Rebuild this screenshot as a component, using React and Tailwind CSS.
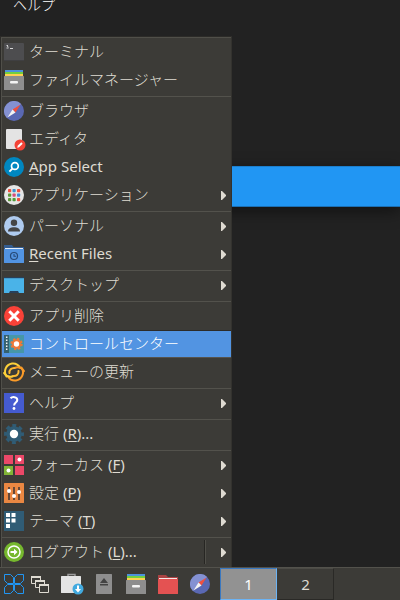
import React, { useState } from 'react';

const TerminalIcon = () => (
  <svg viewBox="0 0 20 20" className="h-5 w-5" aria-hidden="true">
    <rect y="1" width="20" height="18" rx="1" fill="#4d4d4f" />
    <path d="M0 18h20v1H0z" fill="#3f3f41" />
    <path d="M2.500 3.500h1.500M3 4l1.500 1M2.500 6h2M6 6.500h3" stroke="#e4e4e4" strokeWidth="0.900" fill="none" />
  </svg>
);

const CabinetIcon = () => (
  <svg viewBox="0 0 20 20" className="h-5 w-5" aria-hidden="true">
    <path d="M1 0h18v2H1z" fill="#4c92dc" />
    <path d="M1 2h18v2H1z" fill="#72cf3f" />
    <path d="M1 4h18v2H1z" fill="#ffd052" />
    <rect y="6" width="20" height="14" rx="0.500" fill="#8e8e8e" />
    <rect x="6" y="11" width="8" height="2.500" rx="1" fill="#f5f5f5" />
  </svg>
);

const BrowserIcon = () => (
  <svg viewBox="0 0 20 20" className="h-5 w-5" aria-hidden="true">
    <circle cx="10" cy="10" r="10" fill="#5a68b3" />
    <path d="M2.900 17.100A10 10 0 0 1 17.100 2.900z" fill="#8491d2" />
    <path d="M16.500 3.500L11.500 11.500 8.500 8.500z" fill="#f0503f" />
    <path d="M3.500 16.500L8.500 8.500l3 3z" fill="#f3f3f3" />
  </svg>
);

const EditorIcon = () => (
  <svg viewBox="0 0 20 20" className="h-5 w-5 overflow-visible" aria-hidden="true">
    <rect x="2" width="16" height="20" rx="1" fill="#e4e4e4" />
    <circle cx="16" cy="16" r="5.500" fill="#f44336" />
    <path d="M13.300 18.700l.4-1.900 3.600-3.500 1.400 1.400-3.600 3.600z" fill="#fff" />
  </svg>
);

const SearchIcon = () => (
  <svg viewBox="0 0 20 20" className="h-5 w-5" aria-hidden="true">
    <circle cx="10" cy="10" r="10" fill="#0087c1" />
    <circle cx="10.900" cy="9" r="3.400" fill="none" stroke="#fff" strokeWidth="1.700" />
    <path d="M8.600 11.400L5.400 14.600" stroke="#fff" strokeWidth="1.900" />
  </svg>
);

const dots = [
  [4, 4, '#f0503f'], [8.5, 4, '#3d93cf'], [13, 4, '#f0503f'],
  [4, 8.5, '#5b963a'], [8.5, 8.5, '#d94c78'], [13, 8.5, '#4287d8'],
  [4, 13, '#5b963a'], [8.5, 13, '#4d9a3a'], [13, 13, '#f0503f'],
];

const AppsIcon = () => (
  <svg viewBox="0 0 20 20" className="h-5 w-5" aria-hidden="true">
    <circle cx="10" cy="10" r="10" fill="#e6e6e6" />
    {dots.map(([x, y, fill]) => (
      <rect key={`${x}-${y}`} x={x} y={y} width="3.200" height="3.200" rx="0.800" fill={fill} />
    ))}
  </svg>
);

const PersonIcon = () => (
  <svg viewBox="0 0 20 20" className="h-5 w-5" aria-hidden="true">
    <circle cx="10" cy="10" r="10" fill="#afcbef" />
    <circle cx="10" cy="6.700" r="3.200" fill="#454545" />
    <path d="M4 15.500c0-3 2.800-4.300 6-4.300s6 1.300 6 4.300z" fill="#454545" />
  </svg>
);

const RecentIcon = () => (
  <svg viewBox="0 0 20 20" className="h-5 w-5" aria-hidden="true">
    <path d="M0 1h8l1.500 2H20v5H0z" fill="#345d91" />
    <path d="M1 4h18v2H1z" fill="#e5edf7" />
    <rect y="5" width="20" height="14" rx="0.500" fill="#5294e2" />
    <circle cx="10" cy="12" r="3.500" fill="none" stroke="#274a78" strokeWidth="1.200" />
    <path d="M10 10v2.300h2" fill="none" stroke="#274a78" strokeWidth="1.100" />
  </svg>
);

const DesktopIcon = () => (
  <svg viewBox="0 0 20 20" className="h-5 w-5" aria-hidden="true">
    <rect y="2" width="20" height="16" fill="#4ab3e8" />
    <path d="M0 2h20v1.200H0z" fill="#28405a" />
    <path d="M5 18l1-2h8l1 2z" fill="#28405a" />
  </svg>
);

const RemoveIcon = () => (
  <svg viewBox="0 0 20 20" className="h-5 w-5" aria-hidden="true">
    <circle cx="10" cy="10" r="10" fill="#fa4238" />
    <path d="M5.300 5.300l9.400 9.400M14.700 5.300l-9.400 9.400" stroke="#fff" strokeWidth="3" />
  </svg>
);

const ControlIcon = () => (
  <svg viewBox="0 0 20 20" className="h-5 w-5" aria-hidden="true">
    <rect y="1" width="20" height="18" fill="#4697a8" />
    <path d="M0 1h5v18H0z" fill="#35616f" />
    <path d="M2.700 2.500v15" stroke="#f5f5f5" strokeWidth="1.500" strokeDasharray="1.600 1.400" />
    <circle cx="12.500" cy="10" r="4.800" fill="#f07838" />
    <circle cx="12.500" cy="10" r="5.300" fill="none" stroke="#f07838" strokeWidth="1.800" strokeDasharray="2.300 1.860" />
    <circle cx="12.500" cy="10" r="2.700" fill="#fff" />
  </svg>
);

const RefreshIcon = () => (
  <svg viewBox="0 0 20 20" className="h-5 w-5 overflow-visible" aria-hidden="true">
    <g fill="none" strokeWidth="2" strokeLinecap="round">
      <path d="M2.500 14.500C-1 9 2 2.500 8 1.500c4-.5 6.500 1.500 8 4" stroke="#fdd03a" />
      <path d="M17.500 5.500c3.500 5.500.5 12-5.500 13-4 .5-6.500-1.500-8-4" stroke="#fb9b28" />
      <path d="M0 11c2.500 3.500 6 4.500 9.500 3" stroke="#fdd03a" />
      <path d="M20 9c-2.500-3.500-6-4.500-9.500-3" stroke="#fb9b28" />
      <path d="M5.500 11C5 8 7.500 5.800 10.500 6" stroke="#fdb831" />
      <path d="M14.500 9c.5 3-2 5.200-5 5" stroke="#fdb831" />
    </g>
  </svg>
);

const HelpIcon = () => (
  <svg viewBox="0 0 20 20" className="h-5 w-5" aria-hidden="true">
    <rect width="20" height="20" fill="#455bd0" />
    <path d="M6.500 5.300C8 3.700 13.300 3.300 13.300 7c0 2.500-3.200 2.600-3.200 5.500" fill="none" stroke="#fff" strokeWidth="2" />
    <circle cx="10" cy="15.500" r="1.400" fill="#fff" />
  </svg>
);

const RunIcon = () => (
  <svg viewBox="0 0 20 20" className="h-5 w-5" aria-hidden="true">
    <circle cx="10" cy="10" r="7.800" fill="#305c75" />
    <circle cx="10" cy="10" r="8.300" fill="none" stroke="#305c75" strokeWidth="3.400" strokeDasharray="3.800 2.719" strokeDashoffset="1.900" />
    <circle cx="10" cy="10" r="4.200" fill="#fff" />
  </svg>
);

const FocusIcon = () => (
  <svg viewBox="0 0 20 20" className="h-5 w-5" aria-hidden="true">
    <path d="M0 0h9v9H0zM11 0h9v9h-9zM11 11h9v9h-9z" fill="#ec4868" />
    <path d="M0 11h9v9H0z" fill="#82b536" />
    <circle cx="15.500" cy="4.500" r="2" fill="#fff" />
    <circle cx="4.500" cy="15.500" r="2" fill="#fff" />
  </svg>
);

const SlidersIcon = () => (
  <svg viewBox="0 0 20 20" className="h-5 w-5" aria-hidden="true">
    <rect width="20" height="20" rx="0.500" fill="#ea8742" />
    <path d="M5 4v13M10 4v13M15 4v13" stroke="#594237" strokeWidth="1.800" />
    <circle cx="5" cy="8" r="2" fill="#fff" />
    <circle cx="10" cy="13" r="2" fill="#fff" />
    <circle cx="15" cy="9" r="2" fill="#fff" />
  </svg>
);

const ThemeIcon = () => (
  <svg viewBox="0 0 20 20" className="h-5 w-5" aria-hidden="true">
    <rect width="20" height="20" fill="#305c75" />
    <path d="M2 2h4v4H2zM7.500 2h4v4h-4zM2 7.500h4v4H2zM7.500 7.500h4v4h-4zM2 13h4v4H2z" fill="#fff" />
  </svg>
);

const LogoutIcon = () => (
  <svg viewBox="0 0 20 20" className="h-5 w-5" aria-hidden="true">
    <circle cx="10" cy="10" r="10" fill="#76b82e" />
    <circle cx="10" cy="10" r="6" fill="none" stroke="#fff" strokeWidth="1.500" />
    <path d="M6.500 9h3.500V6.800l3.500 3.200-3.500 3.200V11H6.500z" fill="#fff" />
  </svg>
);

const StartIcon = () => (
  <svg viewBox="0 0 20 20" className="h-5 w-5" aria-hidden="true">
    <path
      d="M.5.500h6l3 3v6h-6l-3-3zM19.500.500h-6l-3 3v6h6l3-3zM.5 19.500h6l3-3v-6h-6l-3 3zM19.500 19.500h-6l-3-3v-6h6l3 3z"
      fill="none"
      stroke="#2196f3"
    />
  </svg>
);

const WindowsIcon = () => (
  <svg viewBox="0 0 20 20" className="h-5 w-5" aria-hidden="true">
    <g fill="#3c3b37" stroke="#dfdbd2">
      <path d="M1.500 2.500h9v7h-9z" />
      <path d="M1 3h10" strokeWidth="2" />
      <path d="M5.500 6.500h9v7h-9z" />
      <path d="M5 7h10" strokeWidth="2" />
      <path d="M9.500 10.500h9v8h-9z" />
      <path d="M9 11h10" strokeWidth="2" />
    </g>
  </svg>
);

const SoftwareIcon = () => (
  <svg viewBox="0 0 24 22" className="h-[22px] w-6 shrink-0" aria-hidden="true">
    <path d="M8 4V1.500h7V4" fill="none" stroke="#9b9b9b" strokeWidth="1.500" />
    <rect x="1" y="3" width="20" height="17" rx="0.500" fill="#e4e4e4" />
    <circle cx="18" cy="16" r="5.500" fill="#42aadf" />
    <path d="M17 12.500h2V16h2l-3 3.500-3-3.500h2z" fill="#fff" />
  </svg>
);

const EjectIcon = () => (
  <svg viewBox="0 0 20 20" className="h-5 w-5" aria-hidden="true">
    <rect x="2" width="16" height="20" rx="0.500" fill="#8e8e8e" />
    <path d="M10 4l4 5H6zM6 10h8v1.500H6z" fill="#434343" />
  </svg>
);

const FolderIcon = () => (
  <svg viewBox="0 0 20 20" className="h-5 w-5" aria-hidden="true">
    <path d="M0 1h8l2 2h10v5H0z" fill="#aa4343" />
    <path d="M1 4h18v2H1z" fill="#f6e6e6" />
    <rect y="5" width="20" height="15" rx="0.500" fill="#e45252" />
  </svg>
);

const Arrow = () => (
  <svg viewBox="0 0 5 9" className="h-[9px] w-[5px]" aria-hidden="true">
    <path d="M0 0h1l4 4v1L1 9H0z" fill="#dfdbd2" />
  </svg>
);

const groups = [
  [
    { icon: TerminalIcon, label: 'ターミナル' },
    { icon: CabinetIcon, label: 'ファイルマネージャー' },
  ],
  [
    { icon: BrowserIcon, label: 'ブラウザ' },
    { icon: EditorIcon, label: 'エディタ' },
    { icon: SearchIcon, mnemonic: 'A', after: 'pp Select' },
    { icon: AppsIcon, label: 'アプリケーション', submenu: true },
  ],
  [
    { icon: PersonIcon, label: 'パーソナル', submenu: true },
    { icon: RecentIcon, mnemonic: 'R', after: 'ecent Files', submenu: true },
  ],
  [{ icon: DesktopIcon, label: 'デスクトップ', submenu: true }],
  [
    { icon: RemoveIcon, label: 'アプリ削除' },
    { icon: ControlIcon, label: 'コントロールセンター' },
    { icon: RefreshIcon, label: 'メニューの更新' },
  ],
  [{ icon: HelpIcon, label: 'ヘルプ', submenu: true }],
  [{ icon: RunIcon, label: '実行', before: ' (', mnemonic: 'R', after: ')...' }],
  [
    { icon: FocusIcon, label: 'フォーカス', before: ' (', mnemonic: 'F', after: ')', submenu: true },
    { icon: SlidersIcon, label: '設定', before: ' (', mnemonic: 'P', after: ')', submenu: true },
    { icon: ThemeIcon, label: 'テーマ', before: ' (', mnemonic: 'T', after: ')', submenu: true },
  ],
  [{ icon: LogoutIcon, label: 'ログアウト', before: ' (', mnemonic: 'L', after: ')...', submenu: true, split: true }],
];

const launchers = [
  { icon: WindowsIcon, name: 'ウィンドウ' },
  { icon: SoftwareIcon, name: 'ソフトウェア' },
  { icon: EjectIcon, name: '取り出し' },
  { icon: CabinetIcon, name: 'ファイルマネージャー' },
  { icon: FolderIcon, name: 'フォルダ' },
  { icon: BrowserIcon, name: 'ブラウザ' },
];

const MenuItem = ({ item, active, onHover }) => {
  const Icon = item.icon;
  return (
    <button
      type="button"
      role="menuitem"
      onMouseEnter={onHover}
      className={`flex h-7 w-full items-center border-y pl-[2px] pr-[5px] text-left ${
        active ? 'border-t-[#2c2b28] border-b-[#55534d] bg-[#5294e2] text-white' : 'border-transparent text-[#dfdbd2]'
      }`}
    >
      <Icon />
      <span className="ml-[5px] flex-1 whitespace-pre pb-[2px] text-[15px] leading-5">
        <span className="font-light">{item.label}</span>
        {item.before}
        {item.mnemonic && <span className="underline underline-offset-2">{item.mnemonic}</span>}
        {item.after}
      </span>
      {item.split && <span className="mr-[15px] h-6 w-[2px] border-l border-r border-l-[#272623] border-r-[#504f49]" />}
      {item.submenu && <Arrow />}
    </button>
  );
};

const App = () => {
  const [active, setActive] = useState('コントロールセンター');
  const [workspace, setWorkspace] = useState(1);

  return (
    <div className="flex h-screen flex-col overflow-hidden bg-[#222222] font-['Noto_Sans','Noto_Sans_CJK_JP',sans-serif]">
      <main className="relative flex-1">
        <div className="flex h-[13px] pl-[13px]">
          <span className="text-[14px] font-light leading-[10px] text-white">ヘルプ</span>
        </div>
        <div className="mt-[153px] h-[41px] border-y border-t-[#1c7fcd] border-b-[#1b6fb3] bg-[#2196f3] shadow-[0_4px_16px_rgba(0,0,0,0.5)]" />

        <div
          role="menu"
          className="absolute bottom-0 left-0 w-[232px] border-x border-t border-l-[#2c2b28] border-r-[#33322e] border-t-[#2c2b28] bg-[#3c3b37]"
        >
          <div className="border-t border-l border-[#504f49] pb-px">
            {groups.map((group, i) => (
              <div key={i} className={i > 0 ? 'mt-[2px] border-t border-[#53524c]' : ''}>
                {group.map((item) => {
                  const key = item.label || item.after;
                  return (
                    <MenuItem key={key} item={item} active={active === key} onHover={() => setActive(key)} />
                  );
                })}
              </div>
            ))}
          </div>
        </div>
      </main>

      <footer className="flex h-[33px] border-t border-[#53524c] bg-[#3c3b37]">
        <div className="flex items-center gap-[6px] pl-1">
          <button type="button" aria-label="メニュー" className="h-5 w-5">
            <StartIcon />
          </button>
          <div className="flex items-center gap-3">
            {launchers.map(({ icon: Icon, name }) => (
              <button key={name} type="button" aria-label={name} className="flex h-5 w-5 items-center justify-center">
                <Icon />
              </button>
            ))}
          </div>
        </div>
        <div className="ml-[10px] flex text-[15px]">
          {[1, 2].map((n) => (
            <button
              key={n}
              type="button"
              onClick={() => setWorkspace(n)}
              className={`w-[57px] border ${
                workspace === n
                  ? 'border-t-[#3a78c0] border-r-[#6cb4f5] border-b-[#6cb4f5] border-l-[#3a78c0] bg-[#929292] text-white'
                  : 'border-t-[#4c4b46] border-r-[#2a2926] border-b-[#2a2926] border-l-[#3c3b37] text-[#dfdbd2]'
              }`}
            >
              {n}
            </button>
          ))}
        </div>
      </footer>
    </div>
  );
};

export default App;
